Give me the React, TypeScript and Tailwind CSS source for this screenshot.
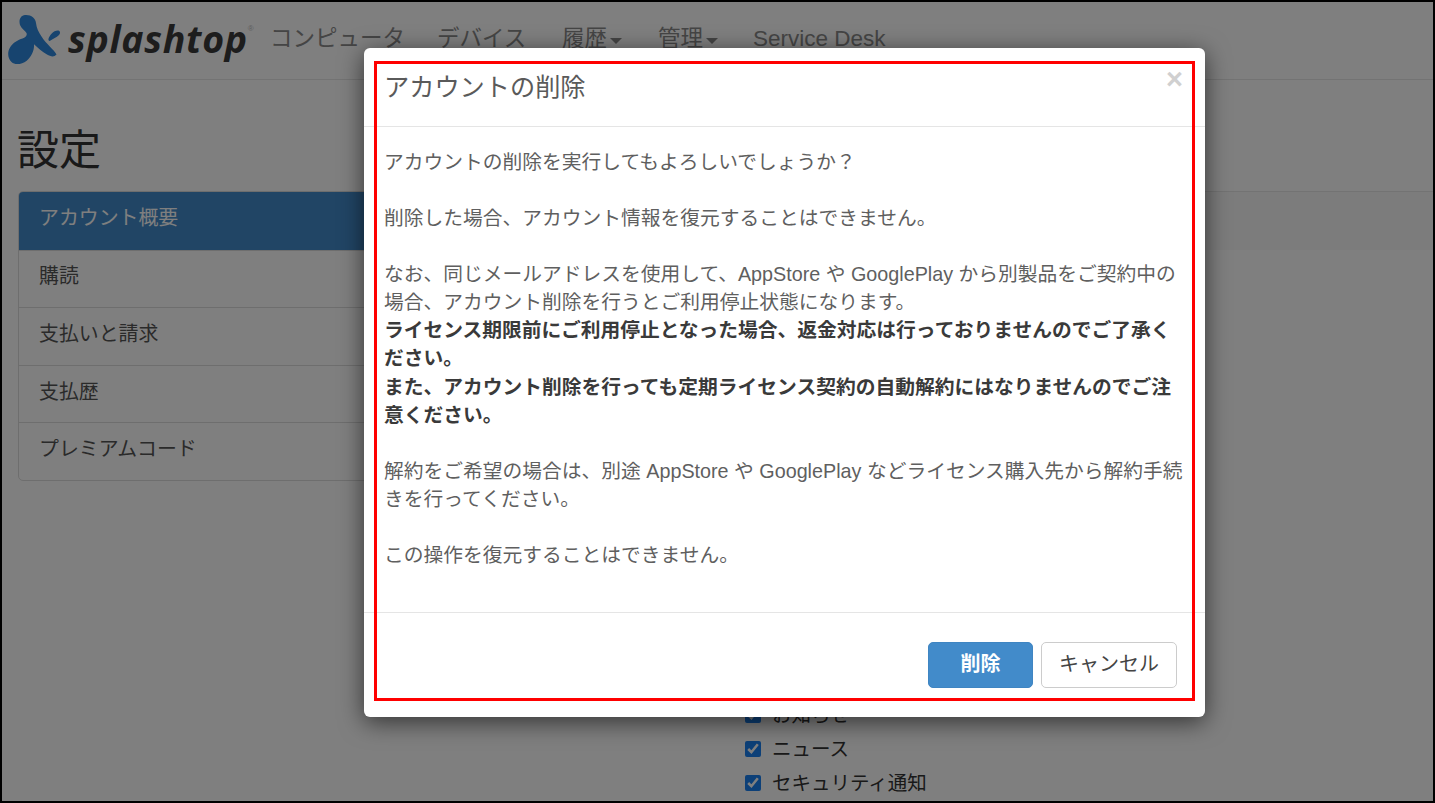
import React from "react";

const sideItems = ["購読", "支払いと請求", "支払歴", "プレミアムコード"];

const Logo = () => (
  <div className="flex w-[257px] shrink-0 items-start">
    <svg width="54" height="52" viewBox="7 13 54 52" className="shrink-0">
      <path
        d="M25 15C31 14.5 35.5 18 36 23C36.5 28 38.5 32 41.7 36.7C44 40.5 47 43.5 50 46.7C52.5 49.5 55 51.5 56.5 54.5C54 57.5 50.5 56.5 47 54.5C42 52 38 48 34 44.3C34.5 50 31.5 57 26.7 60.7C22 64.3 15 65.5 11.5 62C7.5 58 7.3 52 10 47.5C13 42.5 18 40 22.5 38.5C25.5 37.5 27.5 35.5 26.5 33C25 30.5 21.5 28.5 20 25C18.5 20 20.5 15.5 25 15Z"
        fill="#2e88de"
      />
      <path
        d="M58.5 30.5C60.5 31 60.5 33.5 59 35C56.5 37.5 53 38.5 50.5 40.5C49.5 41.5 48 40.5 48.5 38.8C49.5 35.5 53.5 30 58.5 30.5Z"
        fill="#2e88de"
      />
    </svg>
    <span className="ml-[7px] mt-[1px] font-['Open_Sans',sans-serif] text-[37.5px] leading-[50px] font-bold italic tracking-[0.7px] text-[#3a3a3a]">
      splashtop
    </span>
    <span className="mt-[11px] text-[8px] leading-[10px] text-[#bbb]">®</span>
  </div>
);

const Caret = () => (
  <span className="ml-[3px] mt-[4px] inline-block border-x-[6px] border-t-[6px] border-x-transparent border-t-[#888]" />
);

const Nav = () => (
  <div className="flex h-[78px] items-center border-b border-[#e7e7e7] pl-[5px] pb-[4px]">
    <Logo />
    <div className="ml-[6px] flex items-center text-[22.5px] text-[#8a8a8a]">
      <span className="w-[167px]">コンピュータ</span>
      <span className="w-[125px]">デバイス</span>
      <span className="flex w-[96px] items-center">
        履歴
        <Caret />
      </span>
      <span className="flex w-[95px] items-center">
        管理
        <Caret />
      </span>
      <span className="font-normal">Service Desk</span>
    </div>
  </div>
);

const Sidebar = () => (
  <div className="w-[438px] shrink-0 pl-[16px] pr-[18px]">
    <h1 className="mb-[10px] ml-[-1px] mt-[41px] text-[42px] leading-[60px] text-[#333]">設定</h1>
    <div className="overflow-hidden rounded-[5px] border border-[#ddd] text-[19.9px]">
      <div className="flex h-[57.6px] items-center bg-[#428bca] pb-[3px] pl-[20px] text-white">アカウント概要</div>
      {sideItems.map((item) => (
        <div key={item} className="flex h-[57.6px] items-center border-t border-[#ddd] pb-[3px] pl-[20px] text-[#555]">
          {item}
        </div>
      ))}
    </div>
  </div>
);

const Settings = () => (
  <div className="mt-[111px] flex-1 border-t border-[#e7e7e7]">
    <div className="h-[58px] bg-[#f8f8f8]" />
    <div className="h-[462px] border-l border-[#ddd] pl-[304px] pt-[448px] text-[19.5px] leading-[34px] text-[#333]">
      {["お知らせ", "ニュース", "セキュリティ通知"].map((label) => (
        <label key={label} className="flex items-center">
          <input type="checkbox" checked readOnly className="mr-[11px] h-[16px] w-[16px] accent-[#1a80f0]" />
          {label}
        </label>
      ))}
    </div>
  </div>
);

const DeleteDialog = () => (
  <div className="absolute left-[362px] top-[46px] flex h-[669px] w-[841px] flex-col rounded-[6px] bg-white shadow-[0_5px_25px_rgba(0,0,0,0.6)]">
    <div className="relative flex h-[79px] items-start border-b border-[#e5e5e5] px-[20px] pt-[21px]">
      <h4 className="text-[25.2px] leading-[36px] text-[#5a5a5a]">アカウントの削除</h4>
      <span className="absolute right-[22px] top-[13px] font-['Liberation_Sans',sans-serif] text-[29px] leading-[36px] font-bold text-[#d0d0d0]">
        ×
      </span>
    </div>
    <div className="h-[486px] whitespace-nowrap border-b border-[#e5e5e5] px-[20px] pt-[21px] text-[19.75px] leading-[28.07px] text-[#5f5f5f]">
      <p>アカウントの削除を実行してもよろしいでしょうか？</p>
      <br />
      <p>削除した場合、アカウント情報を復元することはできません。</p>
      <br />
      <p>
        なお、同じメールアドレスを使用して、AppStore や GooglePlay から別製品をご契約中の
        <br />
        場合、アカウント削除を行うとご利用停止状態になります。
      </p>
      <p className="font-bold text-[#3a3a3a]">
        ライセンス期限前にご利用停止となった場合、返金対応は行っておりませんのでご了承く
        <br />
        ださい。
        <br />
        また、アカウント削除を行っても定期ライセンス契約の自動解約にはなりませんのでご注
        <br />
        意ください。
      </p>
      <br />
      <p>
        解約をご希望の場合は、別途 AppStore や GooglePlay などライセンス購入先から解約手続
        <br />
        きを行ってください。
      </p>
      <br />
      <p>この操作を復元することはできません。</p>
    </div>
    <div className="flex flex-1 items-start justify-end gap-[8px] pr-[28px] pt-[29px] text-[20px]">
      <button className="h-[46px] w-[105px] rounded-[5px] border border-[#3f85c2] bg-[#428bca] pb-[3px] font-bold text-white">
        削除
      </button>
      <button className="h-[46px] w-[136px] rounded-[5px] border border-[#ccc] bg-white pb-[3px] text-[#444]">
        キャンセル
      </button>
    </div>
    {/* red annotation box from the original capture */}
    <div className="pointer-events-none absolute inset-x-[10px] bottom-[16px] top-[13px] border-[3px] border-[#ff0000]" />
  </div>
);

export default function App() {
  return (
    <div className="relative h-[803px] w-[1435px] overflow-hidden border-2 border-black bg-white font-['Liberation_Sans','Noto_Sans_CJK_JP',sans-serif]">
      <Nav />
      <div className="flex">
        <Sidebar />
        <Settings />
      </div>
      <div className="absolute inset-0 bg-black/50" />
      <DeleteDialog />
    </div>
  );
}
